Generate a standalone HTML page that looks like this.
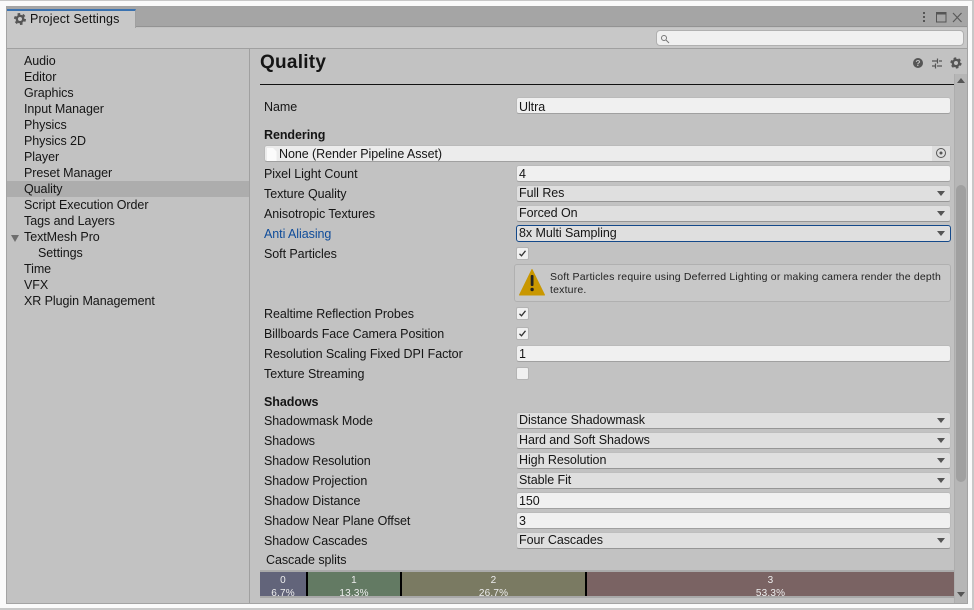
<!DOCTYPE html>
<html><head><meta charset="utf-8"><style>
*{box-sizing:border-box}
html,body{margin:0;padding:0}
body{width:974px;height:610px;overflow:hidden;background:#fafafa;position:relative;font-family:"Liberation Sans",sans-serif;font-size:12.5px;color:#151515}
div{position:absolute}
.frame{left:0;top:0;width:974px;height:610px;border:1px solid #c8c8c8;border-width:1px 2px 2px 0}
.win{left:6px;top:6px;width:962px;height:598px;background:#c2c2c2;border:1px solid #a3a3a3;overflow:hidden}
.t{white-space:nowrap;line-height:16px;height:16px;letter-spacing:-.06px}
.f{left:516px;width:435px;height:17px;background:#f0f0f0;border:1px solid #bababa;border-bottom-color:#a0a0a0;border-radius:3px;padding:0 0 0 2px;line-height:17px;white-space:nowrap;letter-spacing:-.06px}
.d{background:#dfdfdf;border-color:#bebebe;border-bottom-color:#969696;line-height:15px}
.d:after{content:"";position:absolute;right:5px;top:5px;border:4px solid transparent;border-top:5px solid #555;border-bottom:0}
.c{left:516px;width:13px;height:13px;background:#f0f0f0;border:1px solid #b4b4b4;border-radius:2px}
.b{font-weight:bold}
.seg{top:572px;height:23px;color:#eee;text-align:center;font-size:10px;line-height:13px;overflow:hidden;padding-top:2px;letter-spacing:.2px}
</style></head><body>
<div class="frame"></div>
<div class="win"></div>
<div style="left:7px;top:7px;width:960px;height:20px;background:#a5a5a5;border-bottom:1px solid #939393"></div>
<div style="left:7px;top:9px;width:129px;height:19px;background:#c8c8c8;border-top:2px solid #3a72b0;border-right:1px solid #a0a0a0"></div>
<div style="left:7px;top:28px;width:960px;height:20px;background:#c8c8c8"></div>
<svg style="position:absolute;left:14px;top:13px" width="12" height="12" viewBox="0 0 12 12"><circle cx="6" cy="6" r="3.200" fill="none" stroke="#555" stroke-width="2.400"/><circle cx="6" cy="6" r="5" fill="none" stroke="#555" stroke-width="2" stroke-dasharray="2.600 2.640"/></svg>
<div class="t" style="left:30px;top:11px;color:#111;letter-spacing:.12px">Project Settings</div>
<svg style="position:absolute;left:918px;top:10px" width="50" height="16" viewBox="0 0 50 16">
<g fill="#555"><rect x="5" y="2" width="2" height="2"/><rect x="5" y="6" width="2" height="2"/><rect x="5" y="10" width="2" height="2"/></g>
<rect x="18.500" y="2.500" width="9.500" height="9.500" fill="none" stroke="#555"/><rect x="18" y="2" width="10.500" height="2.500" fill="#555"/>
<path d="M35 3l8.500 9M43.500 3L35 12" stroke="#5a5a5a" stroke-width="1.200" fill="none"/></svg>
<div style="left:656px;top:30px;width:308px;height:16px;background:#f0f0f0;border:1px solid #b0b0b0;border-radius:4px"></div>
<svg style="position:absolute;left:660px;top:34px" width="10" height="10" viewBox="0 0 10 10"><circle cx="4" cy="4" r="2.500" fill="none" stroke="#777"/><path d="M6 6l3 3" stroke="#777"/></svg>
<div style="left:7px;top:48px;width:960px;height:1px;background:#a0a0a0"></div>
<div style="left:249px;top:49px;width:1px;height:554px;background:#a0a0a0"></div>
<div style="left:7px;top:181px;width:242px;height:16px;background:#adadad"></div>
<div class="t" style="left:24px;top:53px">Audio</div>
<div class="t" style="left:24px;top:69px">Editor</div>
<div class="t" style="left:24px;top:85px">Graphics</div>
<div class="t" style="left:24px;top:101px">Input Manager</div>
<div class="t" style="left:24px;top:117px">Physics</div>
<div class="t" style="left:24px;top:133px">Physics 2D</div>
<div class="t" style="left:24px;top:149px">Player</div>
<div class="t" style="left:24px;top:165px">Preset Manager</div>
<div class="t" style="left:24px;top:181px">Quality</div>
<div class="t" style="left:24px;top:197px">Script Execution Order</div>
<div class="t" style="left:24px;top:213px">Tags and Layers</div>
<div style="left:11px;top:235px;border:4px solid transparent;border-top:7px solid #6e6e6e;border-bottom:0"></div>
<div class="t" style="left:24px;top:229px">TextMesh Pro</div>
<div class="t" style="left:38px;top:245px">Settings</div>
<div class="t" style="left:24px;top:261px">Time</div>
<div class="t" style="left:24px;top:277px">VFX</div>
<div class="t" style="left:24px;top:293px">XR Plugin Management</div>

<div class="b" style="left:260px;top:51px;font-size:19px;line-height:23px;white-space:nowrap;letter-spacing:.25px">Quality</div>
<svg style="position:absolute;left:912px;top:56px" width="50" height="14" viewBox="0 0 50 14">
<circle cx="6" cy="7" r="5" fill="#555"/><text x="6" y="10" font-size="8.500" font-weight="bold" fill="#c2c2c2" text-anchor="middle" font-family="Liberation Sans">?</text>
<path d="M20 5h5M27 5h3M20 10h3M25 10h5M25.500 2.500v5M23.500 7.500v5" stroke="#555" stroke-width="1.200" fill="none"/>
<circle cx="44" cy="7" r="3.200" fill="none" stroke="#555" stroke-width="2.400"/><circle cx="44" cy="7" r="4.500" fill="none" stroke="#555" stroke-width="2.200" stroke-dasharray="2.400 2.310"/></svg>
<div style="left:260px;top:84px;width:694px;height:1px;background:#111"></div>

<div class="t" style="left:264px;top:99px">Name</div><div class="f" style="top:97px;line-height:19px">Ultra</div>
<div class="t b" style="left:264px;top:127px">Rendering</div>
<div class="f" style="left:264px;width:687px;top:145px;padding-left:14px;background:#ececec;border-color:#bababa;border-bottom-color:#a0a0a0;line-height:16px">None (Render Pipeline Asset)</div>
<svg style="position:absolute;left:267px;top:148px" width="10" height="13" viewBox="0 0 10 13"><path d="M0 0h6l3.500 3.500V13H0z" fill="#fbfbfb"/></svg>
<div style="left:932px;top:146px;width:18px;height:15px;background:#dedede"></div>
<svg style="position:absolute;left:935px;top:147px" width="12" height="12" viewBox="0 0 12 12"><circle cx="6" cy="6" r="4.500" fill="none" stroke="#555"/><circle cx="6" cy="6" r="1.500" fill="#555"/></svg>
<div class="t" style="left:264px;top:166px">Pixel Light Count</div><div class="f" style="top:165px">4</div>
<div class="t" style="left:264px;top:186px">Texture Quality</div><div class="f d" style="top:185px">Full Res</div>
<div class="t" style="left:264px;top:206px">Anisotropic Textures</div><div class="f d" style="top:205px">Forced On</div>
<div class="t" style="left:264px;top:226px;color:#0f4c9a">Anti Aliasing</div><div class="f d" style="top:225px;border-color:#14498a">8x Multi Sampling</div>
<div class="t" style="left:264px;top:246px">Soft Particles</div><div class="c" style="top:247px"></div>
<svg style="position:absolute;left:516px;top:247px" width="13" height="13" viewBox="0 0 13 13"><path d="M3.500 6.800l2 2 4-5" fill="none" stroke="#333" stroke-width="1.300"/></svg>
<div style="left:514px;top:264px;width:437px;height:38px;background:#c8c8c8;border:1px solid #b0b0b0;border-radius:3px"></div>
<svg style="position:absolute;left:518px;top:268px" width="29" height="28" viewBox="0 0 29 28"><path d="M14 1.500L1.500 27h25z" fill="#c99700" stroke="#c99700" stroke-linejoin="round"/><rect x="12.700" y="7" width="2.800" height="11" rx="1" fill="#222"/><circle cx="14.100" cy="21.500" r="1.700" fill="#222"/></svg>
<div style="left:550px;top:271px;width:400px;font-size:10.500px;line-height:12.500px;color:#222;letter-spacing:.19px;white-space:nowrap">Soft Particles require using Deferred Lighting or making camera render the depth<br>texture.</div>
<div class="t" style="left:264px;top:306px">Realtime Reflection Probes</div><div class="c" style="top:307px"></div>
<svg style="position:absolute;left:516px;top:307px" width="13" height="13" viewBox="0 0 13 13"><path d="M3.500 6.800l2 2 4-5" fill="none" stroke="#333" stroke-width="1.300"/></svg>
<div class="t" style="left:264px;top:326px">Billboards Face Camera Position</div><div class="c" style="top:327px"></div>
<svg style="position:absolute;left:516px;top:327px" width="13" height="13" viewBox="0 0 13 13"><path d="M3.500 6.800l2 2 4-5" fill="none" stroke="#333" stroke-width="1.300"/></svg>
<div class="t" style="left:264px;top:346px">Resolution Scaling Fixed DPI Factor</div><div class="f" style="top:345px">1</div>
<div class="t" style="left:264px;top:366px">Texture Streaming</div><div class="c" style="top:367px"></div>
<div class="t b" style="left:264px;top:394px">Shadows</div>
<div class="t" style="left:264px;top:413px">Shadowmask Mode</div><div class="f d" style="top:412px">Distance Shadowmask</div>
<div class="t" style="left:264px;top:433px">Shadows</div><div class="f d" style="top:432px">Hard and Soft Shadows</div>
<div class="t" style="left:264px;top:453px">Shadow Resolution</div><div class="f d" style="top:452px">High Resolution</div>
<div class="t" style="left:264px;top:473px">Shadow Projection</div><div class="f d" style="top:472px">Stable Fit</div>
<div class="t" style="left:264px;top:493px">Shadow Distance</div><div class="f" style="top:492px">150</div>
<div class="t" style="left:264px;top:513px">Shadow Near Plane Offset</div><div class="f" style="top:512px">3</div>
<div class="t" style="left:264px;top:533px">Shadow Cascades</div><div class="f d" style="top:532px">Four Cascades</div>
<div class="t" style="left:266px;top:552px">Cascade splits</div>

<div style="left:260px;top:570px;width:694px;height:2px;background:#aaa"></div>
<div class="seg" style="left:260px;width:46px;height:24px;background:#62647a">0<br>6.7%</div>
<div style="left:306px;top:572px;width:2px;height:24px;background:#000"></div>
<div class="seg" style="left:308px;width:92px;height:24px;background:#637a63">1<br>13.3%</div>
<div style="left:400px;top:572px;width:2px;height:24px;background:#000"></div>
<div class="seg" style="left:402px;width:183px;height:24px;background:#7a7a62">2<br>26.7%</div>
<div style="left:585px;top:572px;width:2px;height:24px;background:#000"></div>
<div class="seg" style="left:587px;width:367px;height:24px;background:#7a6363">3<br>53.3%</div>
<div style="left:260px;top:596px;width:694px;height:2px;background:#a8a8a8"></div>

<div style="left:954px;top:74px;width:13px;height:529px;background:#b6b6b6;border-left:1px solid #adadad"></div>
<div style="left:956px;top:185px;width:10px;height:297px;background:#a0a0a0;border-radius:5px"></div>
<div style="left:957px;top:78px;border:4px solid transparent;border-bottom:5px solid #555;border-top:0"></div>
<div style="left:957px;top:592px;border:4px solid transparent;border-top:5px solid #555;border-bottom:0"></div>
</body></html>
